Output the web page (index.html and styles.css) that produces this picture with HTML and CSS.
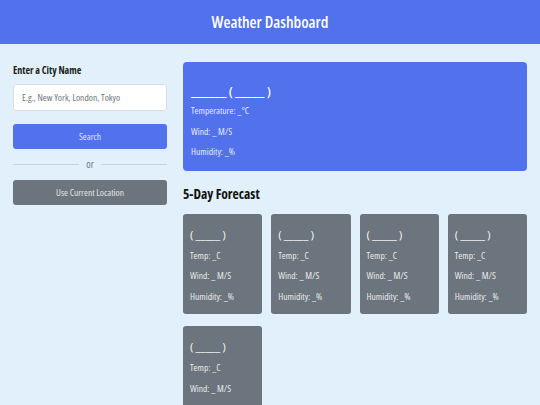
FILE: index.html
```html
<!DOCTYPE html>
<html lang="en">
<head>
    <meta charset="UTF-8">
    <meta name="viewport" content="width=device-width, initial-scale=1.0">
    <title>Weather Dashboard</title>
    <link rel="stylesheet" href="styles.css">
</head>
<body>
    <header class="app-header">
        <h1 class="app-title">Weather Dashboard</h1>
    </header>

    <main class="dashboard">
        <!-- Recherche -->
        <aside class="search-panel">
            <label class="search-label" for="city-input">Enter a City Name</label>
            <input type="text" id="city-input" class="city-input" placeholder="E.g., New York, London, Tokyo">
            <button class="btn btn-primary">Search</button>
            <div class="divider"><span>or</span></div>
            <button class="btn btn-secondary">Use Current Location</button>
        </aside>

        <!-- Météo -->
        <section class="weather-panel">
            <div class="current-card">
                <h2 class="current-title">______ ( _____ )</h2>
                <p>Temperature: _°C</p>
                <p>Wind: _ M/S</p>
                <p>Humidity: _%</p>
            </div>

            <h3 class="forecast-heading">5-Day Forecast</h3>

            <div class="forecast-grid">
                <div class="forecast-card">
                    <h4 class="forecast-date">( _____ )</h4>
                    <p>Temp: _C</p>
                    <p>Wind: _ M/S</p>
                    <p>Humidity: _%</p>
                </div>
                <div class="forecast-card">
                    <h4 class="forecast-date">( _____ )</h4>
                    <p>Temp: _C</p>
                    <p>Wind: _ M/S</p>
                    <p>Humidity: _%</p>
                </div>
                <div class="forecast-card">
                    <h4 class="forecast-date">( _____ )</h4>
                    <p>Temp: _C</p>
                    <p>Wind: _ M/S</p>
                    <p>Humidity: _%</p>
                </div>
                <div class="forecast-card">
                    <h4 class="forecast-date">( _____ )</h4>
                    <p>Temp: _C</p>
                    <p>Wind: _ M/S</p>
                    <p>Humidity: _%</p>
                </div>
                <div class="forecast-card">
                    <h4 class="forecast-date">( _____ )</h4>
                    <p>Temp: _C</p>
                    <p>Wind: _ M/S</p>
                    <p>Humidity: _%</p>
                </div>
            </div>
        </section>
    </main>
</body>
</html>
```

FILE: styles.css
```css
body {
    font-family: 'Open Sans', 'Noto Sans', Arial, sans-serif;
    font-stretch: 75%;
    background: #e2f0fb;
    color: #212529;
    margin: 0;
    padding: 0;
}

.app-header {
    height: 44px;
    background: #5271ec;
    display: flex;
    align-items: center;
    justify-content: center;
}

.app-title {
    margin: 0;
    font-size: 16px;
    font-weight: 600;
    color: #fff;
}

.dashboard {
    display: flex;
    gap: 16px;
    padding: 18px 13px 0 13px;
}

.search-panel {
    width: 154px;
    flex-shrink: 0;
    display: flex;
    flex-direction: column;
}

.search-label {
    font-size: 10px;
    font-weight: 700;
    line-height: 16px;
    color: #1b1e21;
    margin-bottom: 6px;
}

.city-input {
    box-sizing: border-box;
    height: 27px;
    padding: 0 8px;
    border: 1px solid #d6dde3;
    border-radius: 3px;
    background: #fff;
    font-family: inherit;
    font-stretch: 75%;
    font-size: 9.5px;
    margin-bottom: 13px;
    outline: none;
}

.city-input::placeholder {
    color: #6c757d;
}

.btn {
    height: 25px;
    border: none;
    border-radius: 3px;
    font-family: inherit;
    font-stretch: 75%;
    font-size: 9.5px;
    cursor: pointer;
}

.btn-primary {
    background: #5271ec;
    color: #dfe5fc;
}

.btn-secondary {
    background: #6c757d;
    color: #e2e5e8;
}

.divider {
    display: flex;
    align-items: center;
    gap: 7px;
    height: 16px;
    margin: 7px 0 8px 0;
    font-size: 10px;
    color: #6c757d;
}

.divider::before,
.divider::after {
    content: "";
    flex: 1;
    height: 1px;
    background: #c9d3dc;
}

.weather-panel {
    flex: 1;
}

.current-card {
    background: #5271ec;
    border-radius: 4px;
    padding: 8px;
    color: rgba(255,255,255,0.88);
}

.current-title {
    margin: 11px 0 0 0;
    font-size: 13px;
    font-weight: 600;
    line-height: 20px;
    color: #fff;
}

.current-card p,
.forecast-card p {
    margin: 0;
    font-size: 9.5px;
    font-weight: 400;
    line-height: 20.5px;
}

.forecast-heading {
    margin: 13px 0 10px 0;
    font-size: 13.5px;
    font-weight: 700;
    line-height: 20px;
    color: #111;
}

.forecast-grid {
    display: grid;
    grid-template-columns: repeat(4, 1fr);
    column-gap: 9px;
    row-gap: 12px;
}

.forecast-card {
    background: #6c757d;
    border-radius: 3px;
    padding: 12px 7px 7px 7px;
    color: rgba(255,255,255,0.88);
}

.forecast-date {
    margin: 0 0 2px 0;
    font-size: 11.5px;
    font-weight: 400;
    line-height: 18px;
    color: #fff;
}
```
